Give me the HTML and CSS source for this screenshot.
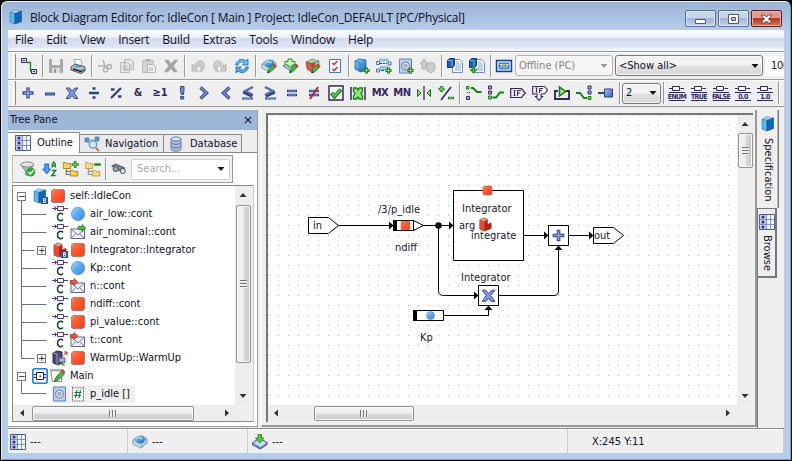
FILE: index.html
```html
<!DOCTYPE html>
<html lang="en">
<head>
<meta charset="utf-8">
<title>Block Diagram Editor</title>
<link rel="stylesheet" href="styles.css">
</head>
<body>
<svg width="0" height="0" class="sprite">
<defs>
<linearGradient id="gb" x1="0" y1="0" x2="1" y2="1"><stop offset="0" stop-color="#8fd4ff"/><stop offset="1" stop-color="#0b62b8"/></linearGradient>
<linearGradient id="gc" x1="0" y1="0" x2="1" y2="1"><stop offset="0" stop-color="#a8d8ff"/><stop offset=".5" stop-color="#55a8f0"/><stop offset="1" stop-color="#3b8ad8"/></linearGradient>
<linearGradient id="gr" x1="0" y1="0" x2="1" y2="1"><stop offset="0" stop-color="#ff8a60"/><stop offset=".4" stop-color="#ff5a30"/><stop offset="1" stop-color="#f8401a"/></linearGradient>
<linearGradient id="gp" x1="0" y1="0" x2="1" y2="1"><stop offset="0" stop-color="#9cc0ff"/><stop offset="1" stop-color="#4a5fc4"/></linearGradient>
<symbol id="book" viewBox="0 0 16 16"><path d="M2 3.500 6 .8 13.500 2 10 4.500z" fill="#9adcff" stroke="#4a86a8" stroke-width=".6"/><path d="M2 3.500 7 4.500V15L2 13z" fill="#59b8ee" stroke="#3572a0" stroke-width=".6"/><path d="M7 4.500 13.500 2V12.500L7 15z" fill="#0a67bd" stroke="#114d88" stroke-width=".6"/></symbol>
<symbol id="bookred" viewBox="0 0 16 16"><path d="M2 3 6 1 10 2.500V8L14 6.500V12L7 15 2 13z" fill="#c2200f" stroke="#6d1e18" stroke-width=".7"/><path d="M2 3 7 4.500V15L2 13z" fill="#e24a35"/><path d="M2 3 6 1 10 2.500 7 4.500z" fill="#f09a88"/></symbol>
<symbol id="badge" viewBox="0 0 16 16"><path d="M9 9h7v7H9z" fill="#1d55b0"/><path d="M11.500 10.500h2v1.700h-2zM11.500 12.500h2v2h-2z" stroke="#fff" stroke-width=".8" fill="none"/></symbol>
<symbol id="route" viewBox="0 0 16 16"><path d="M.5 .5h5v4h-5zM10.500 11.500h5v4h-5z" fill="#e8e4f4" stroke="#31205c"/><path d="M2 2.500h2M12 13.500h2" stroke="#31205c"/><path d="M6 4.500h3.500V13H11" stroke="#19891c" stroke-width="1.300" fill="none"/></symbol>
<symbol id="save" viewBox="0 0 16 16"><path d="M1.500 1.500h13v13h-13z" fill="#aaa" stroke="#a6a6a6"/><path d="M4 1h8v6H4z" fill="#eee"/><path d="M4 10h8v5H4z" fill="#ddd"/><path d="M6 11h2v4H6z" fill="#999"/></symbol>
<symbol id="print" viewBox="0 0 16 16"><path d="M4 1.500h7l1 6H6z" fill="#fff" stroke="#9ab"/><path d="M1 9l4-3 10 3v4l-4 2.500L1 12z" fill="#b8c2c8" stroke="#48525c"/><path d="M3 11l8 2.500 3-2" stroke="#222" stroke-width="1.500" fill="none"/><path d="M5 8.500h6" stroke="#2a9fcb" stroke-width="1.400"/><path d="M12 12h2" stroke="#3a3" stroke-width="1.500"/></symbol>
<symbol id="cut" viewBox="0 0 16 16"><path d="M6 2l2.500 8M1 8h10" stroke="#b4b4b4" stroke-width="1.600" fill="none"/><circle cx="8.500" cy="12" r="2" fill="none" stroke="#b0b0b0" stroke-width="1.300"/><circle cx="12.500" cy="8.500" r="2" fill="none" stroke="#b0b0b0" stroke-width="1.300"/></symbol>
<symbol id="copy" viewBox="0 0 16 16"><path d="M5.500 1.500h7l2 2v8h-9zM1.500 4.500h7l2 2v8h-9z" fill="#e7e7e7" stroke="#b8b8b8"/><path d="M3.500 8h5M3.500 10h5M3.500 12h5M12 6v4" stroke="#b5b5b5"/></symbol>
<symbol id="paste" viewBox="0 0 16 16"><path d="M1.500 2.500h11v12h-11z" fill="#d4d4d4" stroke="#bcbcbc"/><path d="M4.500 1h5v2.500h-5z" fill="#b0b0b0"/><path d="M6.500 6.500h6l2 2v6h-8z" fill="#eee" stroke="#b5b5b5"/><path d="M8 10h4M8 12h4" stroke="#b5b5b5"/></symbol>
<symbol id="del" viewBox="0 0 16 16"><path d="M1.500 2h4L8 5.500 11.500 2h3.500L10.500 8l4 6H10.500L8 10.500 5 14H1l4.500-6z" fill="#a2a2a2" stroke="#b8b8b8" stroke-width=".6"/></symbol>
<symbol id="undo" viewBox="0 0 16 16"><path d="M2 6v7h6L6 11c2-4 5-4 5-1 0 2-1 3-2 4 4-1 6-4 5-8-1-5-8-4-10 3z" fill="#ccc" stroke="#adadad" stroke-width=".8"/></symbol>
<symbol id="redo" viewBox="0 0 16 16"><use href="#undo" transform="matrix(-1 0 0 1 16 0)"/></symbol>
<symbol id="refresh" viewBox="0 0 16 16"><path d="M1.500 7C3 1 9 0 12 3l2-2v6H8.500l2-2C8 3 5 4 4 7z" fill="#6cc0fa" stroke="#1768ad" stroke-width=".8"/><path d="M14.500 9C13 15 7 16 4 13l-2 2V9h5.500l-2 2C8 13 11 12 12 9z" fill="#55aef2" stroke="#1768ad" stroke-width=".8"/></symbol>
<symbol id="pen" viewBox="0 0 16 16"><path d="M6.500 15l1-4 5-5 2.500 2.500-5 5z" fill="#3fb53f" stroke="#1b691d" stroke-width=".6"/><path d="M11.500 7l1.500-1.500 2.500 2.500-1.500 1.500z" fill="#e5302a"/><path d="M6.500 15l.8-2 1.300 1.300z" fill="#222"/></symbol>
<symbol id="globe" viewBox="0 0 16 16"><path d="M1 6l4-3 6-1 4 3v4l-6 5-8-4z" fill="#b8cbd9" stroke="#56738c" stroke-width=".7"/><ellipse cx="8" cy="5.500" rx="5" ry="4" fill="url(#gb)"/><path d="M4 5l3-2 2 2 2-1" stroke="#d8f0ff" fill="none"/><path d="M1 6l4 3 4 1v4l-8-4z" fill="#d3dfe8" stroke="#789" stroke-width=".5"/></symbol>
<symbol id="gen" viewBox="0 0 16 16"><use href="#globe"/><use href="#pen"/></symbol>
<symbol id="comp" viewBox="0 0 16 16"><path d="M.5 9l7-5 8 5-7 5z" fill="#c8daf2" stroke="#35508a"/><path d="M.5 9v2l8 4 7-5" fill="none" stroke="#35508a"/><path d="M6 0h3.500v4H12L7.800 9 3.500 4H6z" fill="#4fca3e" stroke="#176d18" stroke-width=".7"/></symbol>
<symbol id="compedit" viewBox="0 0 16 16"><path d="M0 8l7-4 8 4-7 5z" fill="#c8daf2" stroke="#35508a" stroke-width=".8"/><path d="M5 1h4v2.500h3V7H9v2H5V7H2V3.500h3z" fill="#c9efc0" stroke="#2a8c2a"/><use href="#pen"/></symbol>
<symbol id="cube" viewBox="0 0 16 16"><path d="M1 4l6-3 7 2-6 3z" fill="#9be090" stroke="#568" stroke-width=".6"/><path d="M1 4l7 2v9L2 11z" fill="#db5548" stroke="#833" stroke-width=".6"/><path d="M8 6l6-3v7l-6 5z" fill="#bbb" stroke="#666" stroke-width=".6"/><path d="M6 5l4-1v5L7 10z" fill="#d33c2f"/><use href="#pen"/></symbol>
<symbol id="check" viewBox="0 0 16 16"><path d="M2.500 1.500h11v13h-11z" fill="#f8fcff" stroke="#3a7cb6"/><path d="M5.500 5l1.500 1.500L10.500 3M5.500 11l1.500 1.500L10.500 9" stroke="#dc3624" stroke-width="1.600" fill="none"/></symbol>
<symbol id="add" viewBox="0 0 16 16"><path d="M12.500 9.500v6M9.500 12.500h6" stroke="#147417" stroke-width="3"/><path d="M12.500 10v5M10 12.500h5" stroke="#6bd451" stroke-width="1.200"/></symbol>
<symbol id="addcyl" viewBox="0 0 16 16"><path d="M1 3l4-2 7 1v10l-5 2-6-3z" fill="url(#gb)" stroke="#17558e" stroke-width=".7"/><path d="M1 3l5 2v9" stroke="#2a6ba8" fill="none" stroke-width=".7"/><use href="#add"/></symbol>
<symbol id="addblk" viewBox="0 0 16 16"><path d="M3 .5h10v3H3zM4 8h8v4H4z" fill="#8cc3ee"/><path d="M.5 3.500h3v3h-3zM12 4h3v3h-3zM.5 11h3v3h-3z" fill="#dcecff" stroke="#35508a" stroke-width=".8"/><path d="M4 5.500h2M7 5.500h2M10 5.500h1M5 12.500h3" stroke="#154580"/><use href="#add"/></symbol>
<symbol id="gear" viewBox="0 0 16 16"><path d="M1.500 1h12v14h-12z" fill="#b8cdf2" stroke="#6684bd"/><circle cx="7.500" cy="8" r="4" fill="#e6ebf2" stroke="#717d90"/><circle cx="7.500" cy="8" r="1.700" fill="#b8cdf2" stroke="#717d90" stroke-width=".8"/></symbol>
<symbol id="addgear" viewBox="0 0 16 16"><use href="#gear"/><use href="#add"/></symbol>
<symbol id="up" viewBox="0 0 16 16"><path d="M4 1L0 6h2v5h4V6h2zM7 6l4-2 4 2v6l-4 3-4-2z" fill="#ccc" stroke="#aaa" stroke-width=".8"/></symbol>
<symbol id="doc" viewBox="0 0 16 16"><path d="M5.500 1.500h7l3 3v10h-10z" fill="#fff" stroke="#6e8fb0"/><path d="M9 4h3M9 6h5M9 8h5M8 10h6M8 12h6" stroke="#79a5d8"/><path d="M.5 2.500l2-2h5v7l-2 2h-5z" fill="#1b5fb0" stroke="#123c70"/><path d="M1 2.500h4V9" stroke="#76b4ea" fill="none"/></symbol>
<symbol id="docdown" viewBox="0 0 16 16"><use href="#doc"/><path d="M3 9h3v2.500h2l-3.500 4-3.500-4h2z" fill="#33b32d" stroke="#126b18" stroke-width=".6"/></symbol>
<symbol id="monitor" viewBox="0 0 16 16"><path d="M.5 2.500h15v11H.5z" fill="#dbe9f8" stroke="#1b3c7c" stroke-width="1.400"/><path d="M2.500 4.500h11v7h-11z" fill="#368ddd"/><path d="M4 6.500h2.500L4.500 10M8 6v4M9.500 6.500H12L10 10" stroke="#ffe27a" fill="none"/></symbol>
<symbol id="plus" viewBox="0 0 16 16"><path d="M8 2.500v11M2.500 8h11" stroke="#34407e" stroke-width="3.400"/><path d="M8 3.500v9M3.500 8h9" stroke="#8aa2f0" stroke-width="1.600"/></symbol>
<symbol id="minus" viewBox="0 0 16 16"><path d="M3 9h10" stroke="#34407e" stroke-width="3"/><path d="M4 9h8" stroke="#7f98e8"/></symbol>
<symbol id="times" viewBox="0 0 16 16"><path d="M2 3h3.500L8 6l3-3h3L10 8l4 5.500H10.500L8 10.500 5.500 13.500H2L6 8z" fill="#7f99ea" stroke="#343f7c" stroke-width=".9"/></symbol>
<symbol id="div" viewBox="0 0 16 16"><path d="M3 8h10M6.500 3.500h3M6.500 12.500h3" stroke="#34407e" stroke-width="2.500"/></symbol>
<symbol id="mod" viewBox="0 0 16 16"><path d="M3 13L13 3M3 4.500h3.500M10 11.500h3.500" stroke="#34407e" stroke-width="2.300"/></symbol>
<symbol id="gt" viewBox="0 0 16 16"><path d="M4.500 2.500L10.500 8l-6 5.500" fill="none" stroke="#34407e" stroke-width="3.400"/><path d="M4.500 2.500L10.500 8l-6 5.500" fill="none" stroke="#7c95ea" stroke-width="1.400"/></symbol>
<symbol id="lt" viewBox="0 0 16 16"><use href="#gt" transform="matrix(-1 0 0 1 16 0)"/></symbol>
<symbol id="ge" viewBox="0 0 16 16"><path d="M3 2l8 4-8 4M3 13.500h11M13 7.500l-9 4" fill="none" stroke="#34407e" stroke-width="2"/><path d="M3 2l8 4-8 4M4 13.500h9" fill="none" stroke="#7c95ea" stroke-width=".9"/></symbol>
<symbol id="le" viewBox="0 0 16 16"><use href="#ge" transform="matrix(-1 0 0 1 16 0)"/></symbol>
<symbol id="eq" viewBox="0 0 16 16"><path d="M3 6h10M3 10h10" stroke="#34407e" stroke-width="2.600"/><path d="M4 6h8M4 10h8" stroke="#7c95ea"/></symbol>
<symbol id="ne" viewBox="0 0 16 16"><use href="#eq"/><path d="M4 14L12 2" stroke="#a82222" stroke-width="1.800"/></symbol>
<symbol id="bang" viewBox="0 0 16 16"><path d="M6.500 1.500h3.500v4l-.7 4h-2l-.8-4zM6.700 11.500h3v2.500h-3z" fill="#758de5" stroke="#34407e"/></symbol>
<symbol id="tick" viewBox="0 0 16 16"><path d="M1 1h14v14H1z" fill="#fff" stroke="#34275e" stroke-width="1.500"/><path d="M3.500 8l3 3.500L13 4.500" stroke="#167b1b" stroke-width="4" fill="none"/><path d="M4 8.500l2.500 2.500L12.500 5" stroke="#53c84b" stroke-width="2" fill="none"/></symbol>
<symbol id="abs" viewBox="0 0 16 16"><path d="M1 2v13M15 2v13" stroke="#34275e" stroke-width="1.500"/><path d="M3.500 3h3L8 5l1.500-2h3v3L11 8.500l1.500 2.500v3h-3L8 12l-1.500 2h-3v-3L5 8.500 3.500 6z" fill="#8ee67a" stroke="#167b1b" stroke-width="1.300"/></symbol>
<symbol id="mux" viewBox="0 0 16 16"><path d="M8 1v14" stroke="#34275e" stroke-width="1.300"/><path d="M1.500 4.500v7l3.500-3.500zM14.500 4.500v7L11 8z" fill="#8ade6b" stroke="#167416"/></symbol>
<symbol id="neg" viewBox="0 0 16 16"><path d="M3 15L13 2" stroke="#34275e" stroke-width="1.600"/><path d="M3.500 1v6M.5 4h6M10 13h6" stroke="#187b1b" stroke-width="2.600"/><path d="M3.500 2v4M1.500 4h4M11 13h4" stroke="#8ade6b"/></symbol>
<symbol id="sw1" viewBox="0 0 16 16"><path d="M5 3h2l4 4h4.500" fill="none" stroke="#16831a" stroke-width="2"/><path d="M.5 1.500H3V4H.5z" fill="#6bd451" stroke="#16831a"/><path d="M.5 11.500h3v3h-3z" fill="#a9b4e9" stroke="#34275e"/><path d="M1 7.500h3" stroke="#34275e" stroke-dasharray="1 1"/></symbol>
<symbol id="sw2" viewBox="0 0 16 16"><path d="M4.500 12.500H8l4-5h4" fill="none" stroke="#16831a" stroke-width="2"/><path d="M.5 1h3v3h-3zM.5 6h3v3h-3z" fill="#a9b4e9" stroke="#34275e"/><path d="M.5 11h3v3h-3z" fill="#6bd451" stroke="#16831a"/></symbol>
<symbol id="sw3" viewBox="0 0 16 16"><path d="M0 8h4l4 5h3" fill="none" stroke="#16831a" stroke-width="2"/><path d="M12 1h3v3h-3zM12 6h3v3h-3z" fill="#a9b4e9" stroke="#34275e"/><path d="M12 11.500h3v3h-3z" fill="#6bd451" stroke="#16831a"/></symbol>
<symbol id="if" viewBox="0 0 16 16"><path d="M.7 3.500h10.800L15.300 8l-3.800 4.500H.7z" fill="#eeeaf6" stroke="#34275e" stroke-width="1.200"/><path d="M4.500 5.500v5M3.500 5.500h2M3.500 10.500h2M7.500 11V5.500h3.500M7.500 8H10" stroke="#34275e" fill="none"/></symbol>
<symbol id="ifdown" viewBox="0 0 16 16"><path d="M.7 1.500h11.800L15.500 5 12.500 9H9v2.500h1.500L7 15.300l-3.500-3.800H5V9H.7z" fill="#f7f4fb" stroke="#34275e" stroke-width="1.100"/><path d="M4.500 3v4M3.500 3h2M3.500 7h2M7.500 8V3.500H11M7.500 5.500H10" stroke="#34275e" fill="none"/></symbol>
<symbol id="loop" viewBox="0 0 16 16"><path d="M4 6H1v8h14V6h-3" stroke="#34275e" stroke-width="1.900" fill="none"/><path d="M5.500 2v9l6-4.500z" fill="#a7e88e" stroke="#157919" stroke-width="1.500"/></symbol>
<symbol id="term" viewBox="0 0 16 16"><path d="M0 8h7" stroke="#34407e" stroke-width="2"/><path d="M6.500 4h8v8h-8z" fill="url(#gp)" stroke="#34407e"/></symbol>
<symbol id="port" viewBox="0 0 16 16"><path d="M0 3.500h3M11.500 3.500H15" stroke="#34275e"/><path d="M3.500 1.500h7v4h-7z" fill="#fff" stroke="#34275e"/><path d="M0 8h16v7H0z" fill="#e4effa"/><path d="M0 7.500h16M0 15.500h16" stroke="#34275e"/></symbol>
<symbol id="list" viewBox="0 0 16 16"><path d="M.5 .5h15v15H.5z" fill="#f4f8ff" stroke="#4a5c92"/><path d="M1 1h6v14H1z" fill="#c3cdee"/><path d="M.5 5.500h15M.5 10.500h15M7.500 1v14M11.500 1v14" stroke="#7f93c2"/><g fill="#34347c"><circle cx="4" cy="3" r="1.500"/><circle cx="4" cy="8" r="1.500"/><circle cx="4" cy="13" r="1.500"/></g></symbol>
<symbol id="nav" viewBox="0 0 16 16"><path d="M1 2h4v4H1zM11 1h4v4h-4zM6 4h4" fill="#4d93ce" stroke="#5685b0" stroke-width=".8"/><circle cx="9" cy="8.500" r="3.700" fill="#cfe9ff" stroke="#5c9aca" stroke-width="1.300"/><path d="M12 12l3 3" stroke="#c07a35" stroke-width="2"/></symbol>
<symbol id="db" viewBox="0 0 16 16"><path d="M3 3v10c0 3 10 3 10 0V3" fill="#a9badf" stroke="#6a7cab"/><ellipse cx="8" cy="3" rx="5" ry="2" fill="#dde6f8" stroke="#6a7cab"/><path d="M3 6.500c0 2.500 10 2.500 10 0M3 10c0 2.500 10 2.500 10 0" stroke="#6a7cab" fill="none"/></symbol>
<symbol id="filter" viewBox="0 0 16 16"><path d="M1 4l5 6v4h3v-4l5-6z" fill="#bbb" stroke="#777"/><ellipse cx="7.500" cy="3.500" rx="6.500" ry="2.500" fill="#e6e6e6" stroke="#888"/><circle cx="11" cy="11" r="4.500" fill="#33a735"/><path d="M8.500 11l2 2L14 9" stroke="#fff" stroke-width="1.500" fill="none"/></symbol>
<symbol id="sort" viewBox="0 0 16 16"><path d="M3 3h4v5h2l-4 5-4-5h2z" fill="#4ba3f0" stroke="#1857a0" stroke-width=".8"/><path d="M10.500 6.500V3l1.500-2 1.500 2v3.500M10.500 4.500h3M10 9.500h4l-4 5h4" stroke="#167c30" stroke-width="1.300" fill="none"/></symbol>
<symbol id="tree" viewBox="0 0 16 16"><path d="M.5 1.500h3l1 1h3.500v5H.5zM7.500 9.500h3l1 1h3.500v4.500H7.500z" fill="#f9cf62" stroke="#b5851f"/><path d="M3.500 8v5.500H7M3.500 10.500H7" stroke="#665" fill="none"/></symbol>
<symbol id="expand" viewBox="0 0 16 16"><use href="#tree"/><path d="M12.500 0v7M9 3.500h7" stroke="#188a20" stroke-width="2.400"/><path d="M12.500 1v5M10 3.500h5" stroke="#7ad868" stroke-width=".8"/></symbol>
<symbol id="collapse" viewBox="0 0 16 16"><use href="#tree" opacity=".75"/><path d="M9.500 3.500h6.500" stroke="#188a20" stroke-width="2.400"/></symbol>
<symbol id="bino" viewBox="0 0 16 16"><path d="M1 5l4-2 9 4-3 4z" fill="#82909c" stroke="#46515a"/><circle cx="5" cy="8" r="2.600" fill="#9aa8b2" stroke="#4d565e"/><circle cx="12" cy="10" r="2.600" fill="#cfe4f2" stroke="#4d565e"/></symbol>
<symbol id="cont" viewBox="0 0 16 16"><path d="M0 2.500h5M12 2.500h4M2.500 .5l2 2-2 2" stroke="#4a3d78" fill="none"/><path d="M5.500 .5h6v4h-6z" fill="#fff" stroke="#4a3d78"/><path d="M11 8.500c-1.500-2-5.500-1.500-5.500 2.500s4 4.500 5.500 2.500" stroke="#143e30" stroke-width="1.400" fill="none"/></symbol>
<symbol id="ball" viewBox="0 0 16 16"><circle cx="8" cy="8" r="6.700" fill="url(#gc)" stroke="#6d91b8" stroke-width=".8"/></symbol>
<symbol id="sq" viewBox="0 0 16 16"><path d="M3 1.500h10.500l1 1V13l-1.500 1.500H2.500l-1-1V3z" fill="url(#gr)" stroke="#a06c78" stroke-width=".8"/></symbol>
<symbol id="mail" viewBox="0 0 16 16"><path d="M1 5h13.500v9.500H1z" fill="#f0f0ff" stroke="#666689"/><path d="M1 5l7 6 6.500-6M1 14.500l5-5M14.500 14.500l-5-5" stroke="#777799" fill="none"/></symbol>
<symbol id="mailout" viewBox="0 0 16 16"><use href="#mail"/><path d="M8 2.500h4V.5L15.800 4 12 7.500v-2H8z" fill="#49bc3c" stroke="#187b1b" stroke-width=".7"/></symbol>
<symbol id="mailin" viewBox="0 0 16 16"><use href="#mail"/><path d="M0 2.500h4V.5L7.800 4 4 7.500v-2H0z" fill="#f05b35" stroke="#9c2719" stroke-width=".7"/></symbol>
<symbol id="warm" viewBox="0 0 16 16"><path d="M1 3l4-2 5 1v11l-4 2-5-2z" fill="#4b4b7c" stroke="#292949"/><path d="M1 3l4 1v11" stroke="#9c9cbe" fill="none"/><path d="M7 8h6v4H7z" fill="#a9b4d9" stroke="#5c6380"/><path d="M11.500 5.500l3.500-3.500M12 2h3v3" stroke="#d51f1a" fill="none"/><path d="M10 15l3-3M10 12v3h3" stroke="#159119" fill="none"/></symbol>
<symbol id="main" viewBox="0 0 16 16"><rect x=".8" y=".8" width="14.400" height="14.400" rx="2" fill="#e8f5ff" stroke="#1f80dc" stroke-width="1.600"/><path d="M4.500 4.500h7v7h-7zM2 6.500h2.500M2 9.500h2.500M11.500 6.500H14M11.500 9.500H14" fill="#fff" stroke="#31205c"/><path d="M7.500 7.500h1.500v1.500H7.500z" fill="#31205c"/></symbol>
<symbol id="note" viewBox="0 0 16 16"><path d="M.5 1.500h11v12h-9z" fill="#fff" stroke="#888"/><path d="M1 1h11v2.500H1z" fill="#aaa"/><path d="M4 14l2-5 5.500-6 3 3-6 6z" fill="#48b343" stroke="#216322" stroke-width=".7"/><path d="M11 2.500L12.500 1 15.500 4 14 5.500z" fill="#e63328"/></symbol>
<symbol id="hash" viewBox="0 0 16 16"><path d="M2.500 1v14h11V1l-2 1.500L9.500 1 8 2.500 6.500 1 4.500 2.500z" fill="#fff" stroke="#525252" stroke-dasharray="1 .7"/><path d="M7 4L5.500 12M10.500 4L9 12M4.500 6.500h7M4 9.500h7" stroke="#18802d" stroke-width="1.200"/></symbol>
<symbol id="down" viewBox="0 0 10 6"><path d="M1.500 1h7L5 5z" fill="currentColor"/></symbol>
<symbol id="au" viewBox="0 0 8 8"><path d="M4 2l3.500 4h-7z" fill="#333"/></symbol>
<symbol id="ad" viewBox="0 0 8 8"><path d="M4 6L7.500 2h-7z" fill="#333"/></symbol>
<symbol id="al" viewBox="0 0 8 8"><path d="M2 4l4-3.500v7z" fill="#333"/></symbol>
<symbol id="ar" viewBox="0 0 8 8"><path d="M6 4L2 .5v7z" fill="#333"/></symbol>
</defs>
</svg>

<div class="window">
  <header class="titlebar">
    <svg class="i"><use href="#book"/></svg>
    <h1>Block Diagram Editor for: IdleCon [ Main ] Project: IdleCon_DEFAULT [PC/Physical]</h1>
    <div class="controls">
      <b><svg viewBox="0 0 29 16"><path d="M9.500 8.500h10v4h-10z" fill="#fff" stroke="#555a66"/></svg></b>
      <b><svg viewBox="0 0 29 16"><path d="M9.500 3.500h10v9h-10z" fill="#fff" stroke="#555a66"/><path d="M12.500 6.500h4v3h-4z" fill="#a9bfdc" stroke="#555a66"/></svg></b>
      <b class="close"><svg viewBox="0 0 29 16"><path d="M9.500 4h3l2 2 2-2h3v1l-3 3 3 3v1h-3l-2-2-2 2h-3v-1l3-3-3-3z" fill="#fff" stroke="#643a48"/></svg></b>
    </div>
  </header>
  <nav class="menu"><span>File</span><span>Edit</span><span>View</span><span>Insert</span><span>Build</span><span>Extras</span><span>Tools</span><span>Window</span><span>Help</span></nav>

  <div class="bar main-bar">
    <i class="grip"></i>
    <svg class="i"><use href="#route"/></svg><i class="sep"></i>
    <svg class="i"><use href="#save"/></svg><svg class="i"><use href="#print"/></svg><i class="sep"></i>
    <svg class="i"><use href="#cut"/></svg><svg class="i"><use href="#copy"/></svg><svg class="i"><use href="#paste"/></svg><svg class="i"><use href="#del"/></svg><i class="sep"></i>
    <svg class="i"><use href="#undo"/></svg><svg class="i"><use href="#redo"/></svg><svg class="i"><use href="#refresh"/></svg><i class="sep"></i>
    <svg class="i"><use href="#gen"/></svg><svg class="i"><use href="#compedit"/></svg><svg class="i"><use href="#cube"/></svg><svg class="i"><use href="#check"/></svg><i class="sep"></i>
    <svg class="i"><use href="#addcyl"/></svg><svg class="i"><use href="#addblk"/></svg><svg class="i"><use href="#addgear"/></svg><svg class="i"><use href="#up"/></svg><i class="sep"></i>
    <svg class="i"><use href="#doc"/></svg><svg class="i"><use href="#docdown"/></svg><i class="sep"></i>
    <svg class="i"><use href="#monitor"/></svg>
    <div class="combo off"><span>Offline (PC)</span><svg><use href="#down"/></svg></div>
    <div class="combo show"><span>&lt;Show all&gt;</span><svg><use href="#down"/></svg></div>
    <div class="zoom">100</div>
  </div>

  <div class="bar ops-bar">
    <i class="grip"></i>
    <svg class="i"><use href="#plus"/></svg><svg class="i"><use href="#minus"/></svg><svg class="i"><use href="#times"/></svg><svg class="i"><use href="#div"/></svg><svg class="i"><use href="#mod"/></svg><span class="op">&amp;</span><span class="op">≥1</span><svg class="i"><use href="#bang"/></svg><svg class="i"><use href="#gt"/></svg><svg class="i"><use href="#lt"/></svg><svg class="i"><use href="#le"/></svg><svg class="i"><use href="#ge"/></svg><svg class="i"><use href="#eq"/></svg><svg class="i"><use href="#ne"/></svg><svg class="i"><use href="#tick"/></svg><svg class="i"><use href="#abs"/></svg><span class="op mx">MX</span><span class="op mx">MN</span><svg class="i"><use href="#mux"/></svg><svg class="i"><use href="#neg"/></svg><i class="sep wide"></i>
    <svg class="i"><use href="#sw1"/></svg><svg class="i"><use href="#sw2"/></svg><svg class="i"><use href="#if"/></svg><svg class="i"><use href="#ifdown"/></svg><svg class="i"><use href="#loop"/></svg><svg class="i"><use href="#sw3"/></svg><svg class="i"><use href="#term"/></svg><i class="sep"></i>
    <div class="combo two"><span>2</span><svg><use href="#down"/></svg></div><i class="sep"></i>
    <div class="lit"><svg><use href="#port"/></svg><span>ENUM</span></div><div class="lit"><svg><use href="#port"/></svg><span>TRUE</span></div><div class="lit"><svg><use href="#port"/></svg><span>FALSE</span></div><div class="lit"><svg><use href="#port"/></svg><span>0.0</span></div><div class="lit"><svg><use href="#port"/></svg><span>1.0</span></div><i class="sep"></i>
  </div>

  <main>
    <section class="pane">
      <div class="pane-head"><span>Tree Pane</span><svg viewBox="0 0 8 8"><path d="M1 1l6 6M7 1L1 7" stroke="#223" stroke-width="1.100"/></svg></div>
      <div class="tabs">
        <div class="tab on"><svg><use href="#list"/></svg>Outline</div>
        <div class="tab nav"><svg><use href="#nav"/></svg>Navigation</div>
        <div class="tab data"><svg><use href="#db"/></svg>Database</div>
      </div>
      <div class="pane-body">
        <div class="tools">
          <svg class="i"><use href="#filter"/></svg><svg class="i"><use href="#sort"/></svg><svg class="i"><use href="#expand"/></svg><svg class="i"><use href="#collapse"/></svg><i class="sep"></i><svg class="i"><use href="#bino"/></svg>
          <div class="search"><span>Search...</span><svg><use href="#down"/></svg></div>
        </div>
        <div class="treebox">
          <div class="treeview">
            <div class="tree">
              <svg class="lines" viewBox="0 0 50 217"><path d="M8.500 14v157.500h13M8.500 27.500h25M8.500 45.500h25M8.500 63.500h13M8.500 81.500h25M8.500 99.500h25M8.500 117.500h25M8.500 135.500h25M8.500 153.500h25M8.500 194v12.500h25" fill="none" stroke="#667480"/></svg>
              <div class="rows">
              <div class="row root"><em>−</em><svg><use href="#book"/><use href="#badge"/></svg><svg><use href="#sq"/></svg><span>self::IdleCon</span></div>
              <div class="row"><svg><use href="#cont"/></svg><svg><use href="#ball"/></svg><span>air_low::cont</span></div>
              <div class="row"><svg><use href="#cont"/></svg><svg><use href="#mailout"/></svg><span>air_nominal::cont</span></div>
              <div class="row branch"><em>+</em><svg><use href="#bookred"/><use href="#badge"/></svg><svg><use href="#sq"/></svg><span>Integrator::Integrator</span></div>
              <div class="row"><svg><use href="#cont"/></svg><svg><use href="#ball"/></svg><span>Kp::cont</span></div>
              <div class="row"><svg><use href="#cont"/></svg><svg><use href="#mailin"/></svg><span>n::cont</span></div>
              <div class="row"><svg><use href="#cont"/></svg><svg><use href="#sq"/></svg><span>ndiff::cont</span></div>
              <div class="row"><svg><use href="#cont"/></svg><svg><use href="#sq"/></svg><span>pi_value::cont</span></div>
              <div class="row"><svg><use href="#cont"/></svg><svg><use href="#mailin"/></svg><span>t::cont</span></div>
              <div class="row branch"><em>+</em><svg><use href="#warm"/></svg><svg><use href="#sq"/></svg><span>WarmUp::WarmUp</span></div>
              <div class="row root"><em>−</em><svg><use href="#main"/></svg><svg><use href="#note"/></svg><span>Main</span></div>
              <div class="row"><div class="picked"><svg><use href="#gear"/></svg><svg><use href="#hash"/></svg><span>p_idle []</span></div></div>
              </div>
            </div>
            <div class="vscroll"><svg><use href="#au"/></svg><div class="thumb"><i></i></div><svg><use href="#ad"/></svg></div>
          </div>
          <div class="hscroll"><svg><use href="#al"/></svg><div class="thumb"><i></i></div><svg><use href="#ar"/></svg></div>
        </div>
      </div>
    </section>

    <section class="editor">
      <div class="canvasbox">
        <div class="canvasrow">
          <svg class="canvas" viewBox="268 115 469 290">
            <defs><pattern id="dots" x="268" y="115" width="10" height="10" patternUnits="userSpaceOnUse"><path d="M0 0h1v1H0z" fill="#b4b4b4"/></pattern></defs>
            <path d="M268 115h469v291H268z" fill="#fff"/>
            <path d="M268 115h469v291H268z" fill="url(#dots)"/>
            <path d="M268 115.500h469" stroke="#f4ecc4" stroke-dasharray="5 5"/>
            <g fill="none" stroke="#000">
              <path d="M338 225.500h115M438.500 225.500v65q0 5 5 5h35M523 235.500h26M568 235.500h25M498 295.500h56q4.500 0 4.500-4.500v-45M443 315.500h45.500v-9"/>
              <path d="M308.500 217.500h20l10 8-10 8h-20z" fill="#fff"/>
              <path d="M393.500 220.500h20v10h-20zM413.500 220.500l10 5-10 5z" fill="#fff"/>
              <path d="M453.500 190.500h70v70h-70zM548.500 225.500h20v20h-20zM478.500 285.500h20v20h-20zM413.500 310.500h30v10h-30z" fill="#fff"/>
              <path d="M593.500 227.500h20l10 8-10 8h-20z" fill="#fff"/>
            </g>
            <path d="M393 220h4v11h-4zM413 310h4v11h-4zM389 221.500l4.500 4-4.500 4zM449 221.500l4.500 4-4.500 4zM474 291.500l4.500 4-4.500 4zM544 231.500l4.500 4-4.500 4zM589 231.500l4.500 4-4.500 4zM554.500 250l4-4.500 4 4.500zM484.500 310l4-4.500 4 4.500z"/>
            <circle cx="438.500" cy="225.500" r="3.200"/>
            <use href="#sq" x="400" y="220" width="11" height="11"/>
            <use href="#sq" x="482" y="185" width="11" height="11"/>
            <circle cx="430.500" cy="315.500" r="4" fill="url(#gc)" stroke="#5687b8" stroke-width=".6"/>
            <use href="#plus" x="550" y="227" width="17" height="17"/>
            <use href="#times" x="480" y="287" width="17" height="17"/>
            <use href="#bookred" x="478" y="217" width="15" height="15"/>
            <text x="313" y="229">in</text><text x="378" y="213">/3/p_idle</text><text x="395" y="251">ndiff</text>
            <text x="462" y="212">Integrator</text><text x="459" y="229">arg</text><text x="471" y="239">integrate</text>
            <text x="461" y="281">Integrator</text><text x="594" y="239">out</text><text x="420" y="341">Kp</text>
          </svg>
          <div class="vscroll"><svg><use href="#au"/></svg><div class="thumb"><i></i></div><svg><use href="#ad"/></svg></div>
        </div>
        <div class="hscroll"><svg><use href="#al"/></svg><div class="thumb"><i></i></div><svg><use href="#ar"/></svg></div>
      </div>
    </section>

    <aside>
      <div class="side spec"><svg><use href="#book"/></svg><span>Specification</span></div>
      <div class="side browse"><svg><use href="#list"/></svg><span>Browse</span></div>
      <div class="side-rest"></div>
    </aside>
  </main>

  <footer>
    <div><svg><use href="#list"/></svg>---</div>
    <div><svg><use href="#globe"/></svg>---</div>
    <div><svg><use href="#comp"/></svg>---</div>
    <div>X:245 Y:11</div>
  </footer>
</div>
</body>
</html>
```
FILE: styles.css
```css
* { box-sizing: border-box; }
body {
  margin: 0;
  width: 792px;
  height: 461px;
  overflow: hidden;
  background: #000;
  color: #101024;
  font: 11px/14px "DejaVu Sans Condensed", "DejaVu Sans", sans-serif;
  font-stretch: condensed;
}
svg { display: block; flex: none; }
.sprite { position: absolute; }
.window {
  width: 790px;
  height: 459px;
  margin: 1px;
  padding: 0 6px;
  display: flex;
  flex-direction: column;
  border: 1px solid #41b4e6;
  border-top-color: #e4eef8;
  border-left-color: #e4eef8;
  border-radius: 6px 6px 0 0;
  background: linear-gradient(#9bb4d6, #b5cdea 28px, #b5cdea);
}

/* Title bar and menu */
.titlebar { height: 28px; flex: none; display: flex; align-items: center; padding-right: 2px; }
.titlebar .i { width: 16px; height: 16px; margin: 1px 6px 0 0; }
h1 {
  margin: 4px 0 0;
  flex: 1;
  white-space: nowrap;
  font: 12px/16px "Open Sans", "Noto Sans", sans-serif;
  letter-spacing: -0.22px;
}
.controls { display: flex; gap: 2px; align-self: flex-start; margin-top: 8px; }
.controls b {
  width: 31px;
  height: 17px;
  border: 1px solid #5c6c88;
  border-radius: 2px;
  background: linear-gradient(#c5d6eb 45%, #9fb7d5 50%, #bcd2ec);
  box-shadow: inset 0 0 0 1px #dce7f4;
}
.controls svg { width: 29px; height: 16px; }
.controls .close {
  border-color: #521c28;
  background: linear-gradient(#e0998d 45%, #b93620 50%, #d97255);
  box-shadow: inset 0 0 0 1px #e8b4a8;
}
.menu {
  height: 21px;
  flex: none;
  display: flex;
  gap: 13px;
  padding: 2px 0 0 7px;
  background: linear-gradient(#fff, #eef1f9 35%, #d5dbed 40%, #dde3f3 80%, #f4f5f8 90%);
  font: 12px/16px "Open Sans", "Noto Sans", sans-serif;
  letter-spacing: -0.2px;
}

/* Toolbars */
.bar {
  display: flex;
  flex: none;
  align-items: center;
  overflow: hidden;
  background: #efefef;
  border-top: 1px solid #999;
  box-shadow: inset 0 1px #fff;
}
.main-bar { height: 28px; padding-left: 5px; }
.ops-bar { height: 28px; padding-left: 5px; border-bottom: 1px solid #999; }
.grip { width: 3px; height: 24px; flex: none; margin-right: 2px; border-right: 1px solid #888; border-left: 1px solid #fff; }
.ops-bar .grip { margin-right: 1px; }
.i { width: 22px; height: 16px; }
.sep { width: 5px; height: 22px; flex: none; background: linear-gradient(90deg, transparent 2px, #999 2px, #999 3px, #fff 3px, #fff 4px, transparent 4px); }
.sep.wide { width: 6px; }
.op { width: 22px; flex: none; text-align: center; color: #34275e; font-weight: bold; }
.op.mx { font: bold 10px/14px "DejaVu Sans", sans-serif; letter-spacing: -0.5px; }
.combo {
  display: flex;
  flex: none;
  align-items: center;
  justify-content: space-between;
  border: 1px solid #777;
  border-radius: 3px;
  box-shadow: inset 0 0 0 1px #fafafa;
  background: linear-gradient(#f3f3f3 48%, #e2e2e2 52%, #d6d6d6);
}
.combo svg { width: 10px; height: 6px; color: #111; }
.combo.off { width: 98px; height: 21px; padding: 0 3px; background: #f5f5f5; border-color: #b2b2b2; color: #858585; }
.combo.off svg { color: #999; }
.combo.show { width: 148px; height: 21px; padding: 0 2px 0 3px; margin-left: 2px; }
.combo.two { width: 39px; height: 21px; padding: 0 2px 0 3px; }
.zoom { width: 30px; height: 20px; flex: none; margin-left: 2px; padding: 3px 0 0 6px; background: #fff; overflow: hidden; letter-spacing: -0.3px; }
.lit { width: 22px; height: 16px; flex: none; display: grid; justify-items: center; color: #34275e; }
.lit svg, .lit span { grid-area: 1 / 1; }
.lit svg { width: 16px; height: 16px; }
.lit span { margin-top: 8px; font: bold 7px/8px "DejaVu Sans Condensed", sans-serif; letter-spacing: -0.6px; }

/* Work area */
main { height: 321px; flex: none; display: flex; background: #efefef; padding-top: 3px; }
.pane { width: 250px; height: 317px; border-right: 1px solid #999; border-bottom: 1px solid #999; display: flex; flex-direction: column; }
.pane-head { height: 20px; flex: none; display: flex; align-items: center; justify-content: space-between; padding: 0 5px 0 2px; background: #9db7d9; }
.pane-head svg { width: 8px; height: 8px; }
.tabs { height: 23px; flex: none; display: flex; align-items: flex-end; border-bottom: 1px solid #888; }
.tab { height: 18px; display: flex; align-items: center; padding-top: 1px; border: 1px solid #888; border-left: 0; border-bottom: 0; background: #e9e9ea; }
.tab svg { width: 16px; height: 16px; }
.tab.on { height: 21px; width: 72px; margin-bottom: -1px; padding: 0 0 1px 7px; gap: 6px; background: #fff; }
.tab.nav { width: 84px; padding-left: 4px; gap: 5px; }
.tab.data { width: 78px; padding-left: 4px; gap: 6px; }
.pane-body { flex: 1; min-height: 0; padding: 2px 3px 4px 4px; display: flex; flex-direction: column; gap: 2px; background: #fff; }
.tools { width: 221px; height: 28px; flex: none; display: flex; align-items: center; padding-left: 4px; background: #f0f0f0; border: 1px solid #999; border-left-color: #bbb; }
.tools .i { width: 21.500px; }
.search { width: 99px; height: 21px; margin-left: auto; margin-right: 2px; display: flex; align-items: center; justify-content: space-between; padding: 0 3px 0 5px; border: 1px solid #d2d2d2; border-radius: 2px; background: #fff; color: #aaa; }
.search svg { width: 10px; height: 6px; color: #111; }
.treebox { flex: 1; min-height: 0; border: 1px solid #888; border-right-color: #ccc; display: flex; flex-direction: column; background: #efefef; }
.treeview { height: 219px; flex: none; display: flex; }
.tree { flex: 1; display: grid; align-content: start; padding-top: 1px; background: #fff; }
.lines, .rows { grid-area: 1 / 1; }
.lines { width: 50px; height: 217px; }
.row { height: 18px; display: flex; align-items: center; gap: 2px; padding-left: 39px; white-space: nowrap; }
.row svg { width: 16px; height: 16px; }
.row span { margin-left: 2px; }
.row.root { padding-left: 4px; }
.row.branch { padding-left: 24px; }
em { width: 9px; height: 9px; flex: none; margin-right: 4px; border: 1px solid #777; background: #fff; color: #111; font: 9px/7px "DejaVu Sans", sans-serif; text-align: center; }
.picked { display: flex; align-items: center; gap: 2px; height: 18px; padding-right: 5px; background: #efefef; }
.vscroll { width: 16px; flex: none; display: flex; flex-direction: column; align-items: center; justify-content: space-between; background: #ededed; }
.hscroll { flex: none; display: flex; align-items: center; background: #ededed; }
.vscroll svg, .hscroll svg { width: 8px; height: 8px; }
.thumb { display: grid; place-items: center; border: 1px solid #929292; border-radius: 2px; box-shadow: inset 0 0 0 1px #f8f8f8; }
.vscroll .thumb { width: 15px; background: linear-gradient(90deg, #f1f1f1 45%, #d9d9d9 55%, #c9c9c9); }
.hscroll .thumb { height: 15px; background: linear-gradient(#f1f1f1 45%, #d9d9d9 55%, #c9c9c9); }
.vscroll .thumb i { width: 7px; height: 8px; background: repeating-linear-gradient(#777 0 1px, #eee 1px 3px); }
.hscroll .thumb i { width: 8px; height: 7px; background: repeating-linear-gradient(90deg, #777 0 1px, #eee 1px 3px); }
.treeview .vscroll { padding: 5px 0; margin-right: 2px; }
.treeview .thumb { height: 158px; margin-bottom: 24px; }
.treebox .hscroll { height: 16px; padding: 0 5px; width: 223px; }
.treebox .hscroll .thumb { width: 162px; margin-left: 6px; margin-right: auto; }

.editor { width: 496px; height: 317px; margin-left: 3px; padding: 3px 3px 4px 4px; border: solid #999; border-width: 0 2px 2px 1px; border-left-color: #fff; }
.canvasbox { width: 487px; height: 309px; border: 2px solid #777; border-right: 0; border-bottom: 0; }
.canvasrow { height: 290px; display: flex; }
.canvas { width: 469px; height: 290px; }
.canvas text { font-size: 11px; fill: #201828; }
.canvasrow .vscroll { padding: 5px 0; }
.canvasrow .thumb { height: 35px; margin-top: 5px; margin-bottom: auto; }
.canvasbox .hscroll { width: 469px; height: 16px; padding: 0 5px 0 4px; }
.canvasbox .hscroll .thumb { width: 100px; margin-left: 34px; margin-right: auto; }

aside { width: 27px; display: flex; flex-direction: column; }
.side { display: flex; flex-direction: column; align-items: center; }
.side svg { width: 16px; height: 16px; }
.side span { writing-mode: vertical-rl; line-height: 16px; }
.spec { width: 22px; height: 98px; padding-top: 6px; gap: 6px; border-right: 1px solid #777; box-shadow: inset -1px 0 #bbb; }
.browse { width: 20px; height: 70px; padding-top: 5px; gap: 5px; border: 1px solid #777; border-width: 1px 2px 2px 1px; }
.side-rest { flex: 1; border-left: 1px solid #777; }

footer { height: 25px; flex: none; display: flex; background: #efefef; border-top: 1px solid #888; box-shadow: inset 0 1px #fff; }
footer div { display: flex; align-items: center; gap: 4px; padding: 1px 0 0 2px; border-right: 1px solid #ccc; }
footer svg { width: 16px; height: 16px; }
footer div:nth-child(1) { width: 120px; }
footer div:nth-child(2) { width: 120px; padding-left: 4px; }
footer div:nth-child(3) { width: 320px; padding-left: 4px; }
footer div:nth-child(4) { width: 216px; padding-left: 24px; }
```
